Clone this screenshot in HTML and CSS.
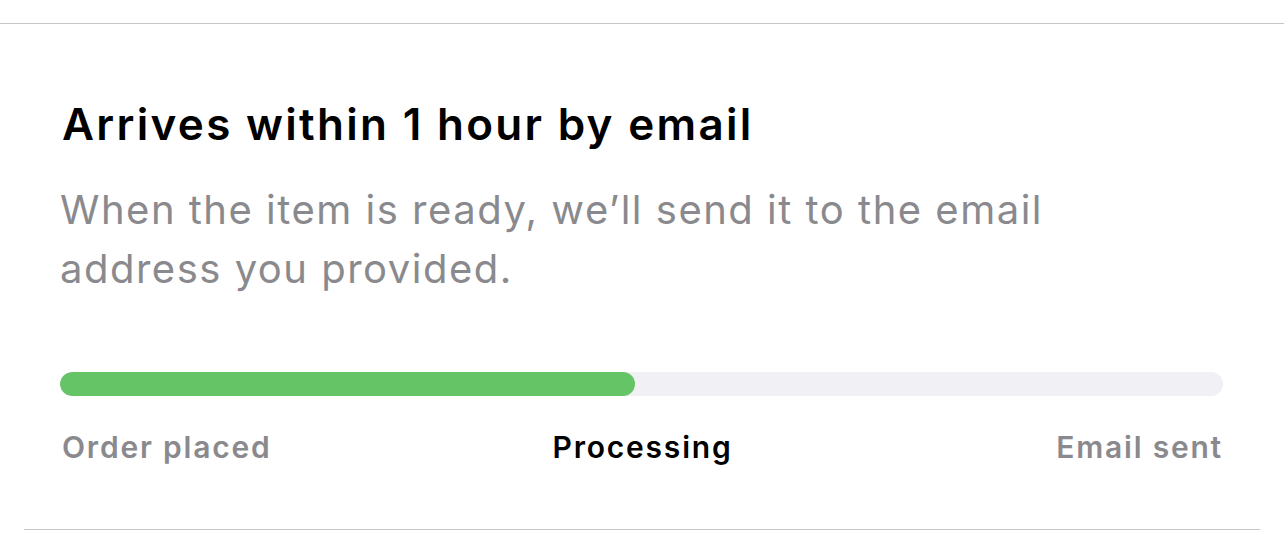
FILE: index.html
```html
<!DOCTYPE html>
<html>
<head>
<meta charset="utf-8">
<link rel="stylesheet" href="styles.css">
</head>
<body>
<div class="page">
  <section class="card">
    <h1 class="title">Arrives within 1 hour by email</h1>
    <p class="subtitle">When the item is ready, we’ll send it to the email address you provided.</p>
    <div class="track"><div class="fill" style="width: 49.4%"></div></div>
    <div class="steps">
      <span class="step start">Order placed</span>
      <span class="step current">Processing</span>
      <span class="step end">Email sent</span>
    </div>
  </section>
</div>
</body>
</html>
```

FILE: styles.css
```css
* { box-sizing: border-box; margin: 0; padding: 0; }
html, body { background: #fff; }
body {
  font-family: Inter, "Noto Sans", sans-serif;
  -webkit-font-smoothing: antialiased;
}
.page {
  width: 1284px;
  height: 544px;
  padding-top: 23px;
}
.card {
  border-top: 1px solid #c6c6c8;
  padding: 70px 61px 0 60px;
  height: 507px;
  position: relative;
}
.card::after {
  content: "";
  position: absolute;
  left: 24px;
  right: 24px;
  bottom: 0;
  border-bottom: 1px solid #c6c6c8;
}
.title {
  font-size: 44px;
  font-weight: 600;
  color: #000;
  line-height: 60px;
  letter-spacing: 2.3px;
  padding-left: 2px;
}
.subtitle {
  font-size: 40px;
  font-weight: 400;
  color: #8a8a8e;
  line-height: 59px;
  letter-spacing: 1.5px;
  margin-top: 26px;
  max-width: 1020px;
}
.track {
  margin-top: 74px;
  height: 24px;
  border-radius: 12px;
  background: #f0f0f5;
  overflow: hidden;
}
.fill {
  height: 100%;
  border-radius: 12px;
  background: #65c466;
}
.steps {
  display: grid;
  grid-template-columns: 1fr auto 1fr;
  margin-top: 31px;
  padding: 0 0 0 2px;
}
.step {
  font-size: 30px;
  font-weight: 600;
  color: #8a8a8e;
  line-height: 40px;
  letter-spacing: 1.8px;
}
.step.start { justify-self: start; }
.step.end { justify-self: end; }
.step.current { color: #000; justify-self: center; }
```
